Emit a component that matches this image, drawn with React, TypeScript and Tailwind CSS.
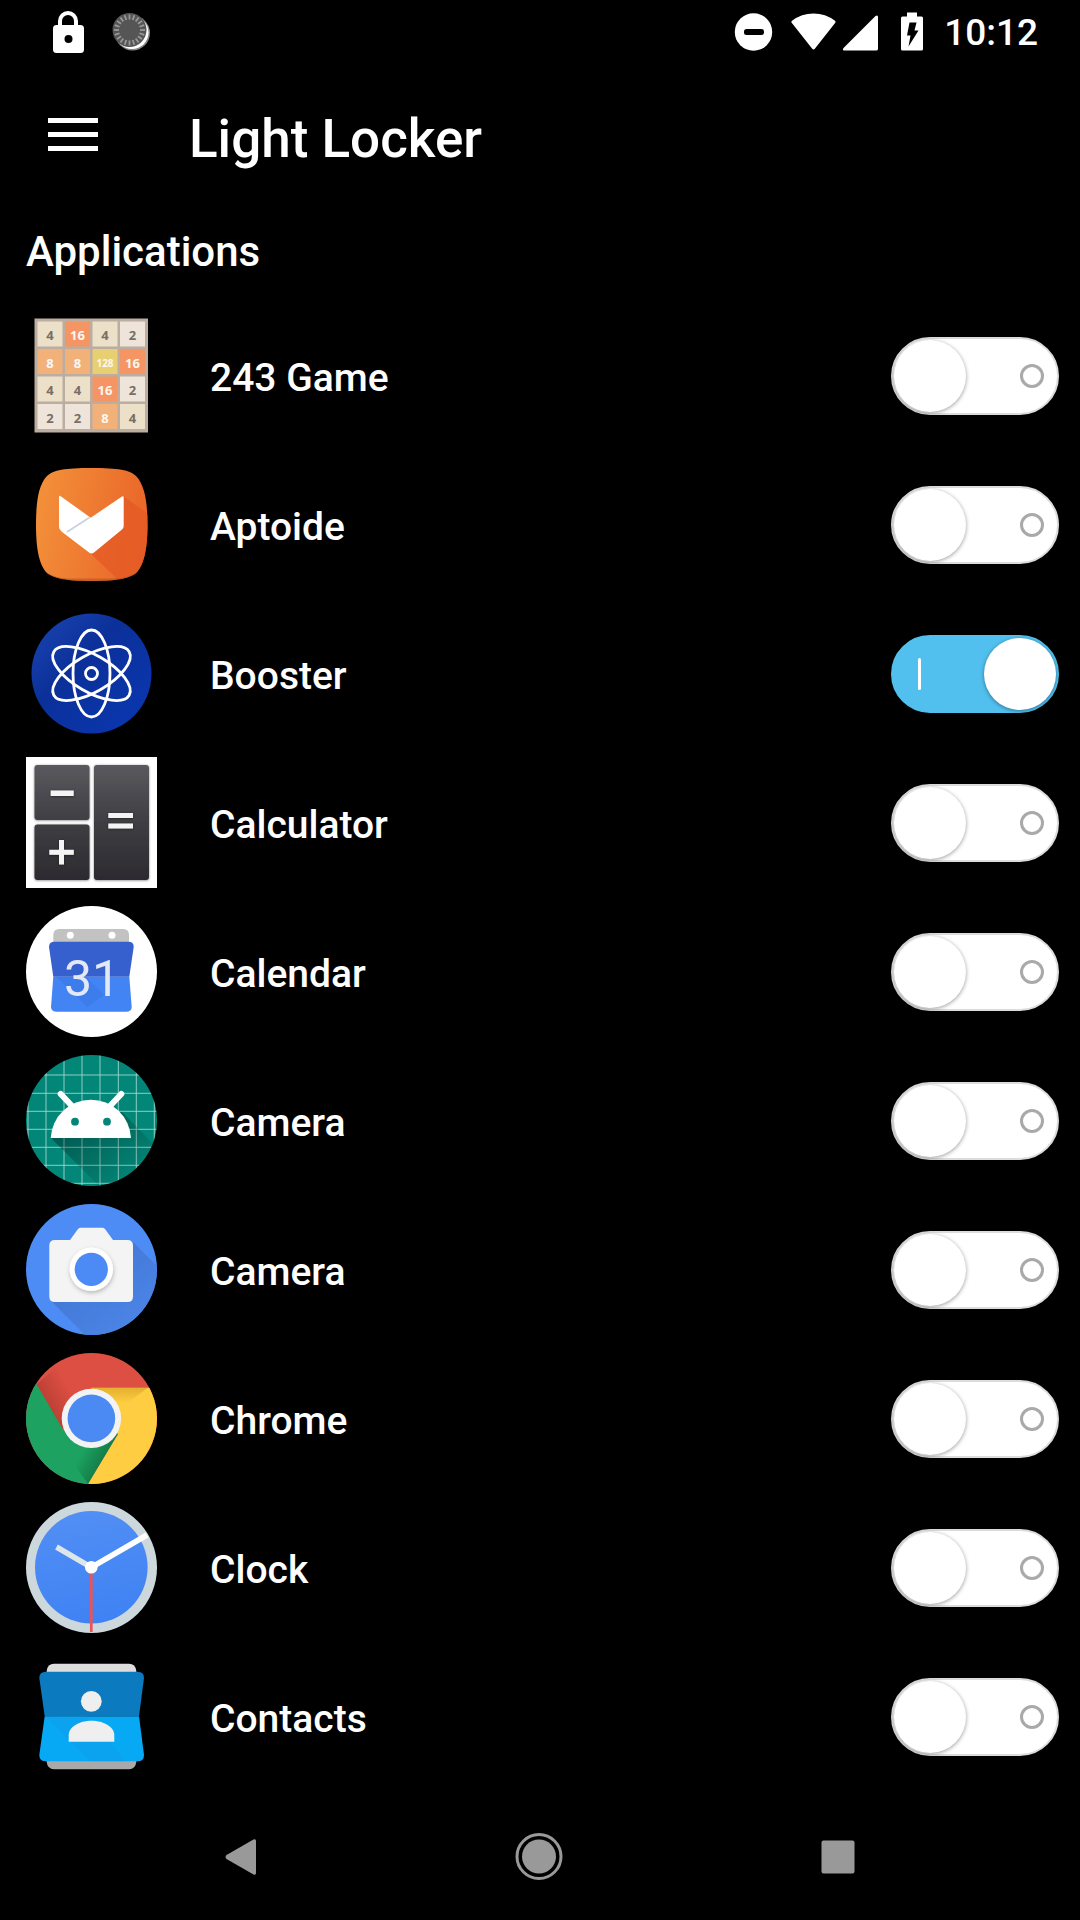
import React from "react";

function IconFrame({ children }: { children: React.ReactNode }) {
  return (
    <svg viewBox="0 0 131 131" className="size-[131px] shrink-0" aria-hidden="true">
      {children}
    </svg>
  );
}

const TILE_COLORS: Record<number, string> = {
  2: "#eee4da",
  4: "#ede0c8",
  8: "#f2b179",
  16: "#f59563",
  128: "#e8cf72",
};

const BOARD = [
  [4, 16, 4, 2],
  [8, 8, 128, 16],
  [4, 4, 16, 2],
  [2, 2, 8, 4],
];

function GameIcon() {
  return (
    <IconFrame>
      <rect x="8.5" y="8.5" width="113.5" height="114" fill="#bbada0" />
      {BOARD.map((row, r) =>
        row.map((n, c) => (
          <g key={`${r}-${c}`}>
            <rect x={11.5 + c * 27.5} y={11.5 + r * 27.5} width="25" height="25" fill={TILE_COLORS[n]} />
            <text
              x={24 + c * 27.5}
              y={(n === 128 ? 29 : 30) + r * 27.5}
              textAnchor="middle"
              fontSize={n === 128 ? 10 : 13}
              fontWeight="700"
              fontFamily="'Open Sans', 'Noto Sans', sans-serif"
              fill={n < 8 ? "#776e65" : "#f9f6f2"}
            >
              {n}
            </text>
          </g>
        )),
      )}
    </IconFrame>
  );
}

function AptoideIcon() {
  const shape =
    "M65.5 9C92 9 104 11 110 17C119 26 121.5 45 121.5 65.5C121.5 86 119 105 110 114C104 119 92 122 65.5 122C39 122 27 119 21 114C12 105 10 86 10 65.5C10 45 12 26 21 17C27 11 39 9 65.5 9Z";
  return (
    <IconFrame>
      <defs>
        <linearGradient id="apt" x1="0" y1="0.2" x2="1" y2="0.4">
          <stop offset="0" stopColor="#f3913a" />
          <stop offset="1" stopColor="#ea6629" />
        </linearGradient>
        <clipPath id="aptClip">
          <path d={shape} />
        </clipPath>
      </defs>
      <path d={shape} fill="url(#apt)" />
      <g clipPath="url(#aptClip)">
        <path d="M97 37L131 61V131H103L65 95Z" fill="#e45a26" opacity="0.75" />
        <path d="M14 108C27 121 39 119.500 65.500 119.500C92 119.500 104 121 117 108V131H14Z" fill="#b5541c" opacity="0.6" />
      </g>
      <path
        d="M33 38Q33 36 35 37.500L64.700 58.700L96 37.500Q97.700 36.500 97.700 38.500V67Q97.700 69 96 70.500L68 93.500Q65.500 95.500 63 93.500L35.500 72.500Q33 70.500 33 68Z"
        fill="#fff"
      />
      <path d="M63.500 58.500L41 73" stroke="#c9d3e0" strokeWidth="2" />
    </IconFrame>
  );
}

function BoosterIcon() {
  return (
    <IconFrame>
      <defs>
        <linearGradient id="boost" x1="0" y1="0" x2="1" y2="1">
          <stop offset="0" stopColor="#1c46b4" />
          <stop offset="0.4" stopColor="#0b3099" />
          <stop offset="1" stopColor="#0a37b2" />
        </linearGradient>
      </defs>
      <circle cx="65.5" cy="65.500" r="60" fill="url(#boost)" />
      <g fill="none" stroke="#fff" strokeWidth="2.8">
        <ellipse cx="65.5" cy="65.5" rx="18.5" ry="43.5" />
        <ellipse cx="65.5" cy="65.5" rx="18.5" ry="43.5" transform="rotate(60 65.5 65.5)" />
        <ellipse cx="65.5" cy="65.5" rx="18.5" ry="43.5" transform="rotate(-60 65.5 65.5)" />
        <circle cx="65.5" cy="65.5" r="6" />
      </g>
    </IconFrame>
  );
}

function CalculatorIcon() {
  return (
    <IconFrame>
      <defs>
        <linearGradient id="key" gradientUnits="userSpaceOnUse" x1="0" y1="8" x2="0" y2="123">
          <stop offset="0" stopColor="#59595e" />
          <stop offset="0.5" stopColor="#3e3e43" />
          <stop offset="1" stopColor="#2c2b30" />
        </linearGradient>
        <filter id="keySoft" x="-10%" y="-10%" width="120%" height="120%">
          <feDropShadow dx="0" dy="0.5" stdDeviation="1" floodColor="#000" floodOpacity="0.5" />
        </filter>
      </defs>
      <rect width="131" height="131" fill="#fff" />
      <g fill="url(#key)" filter="url(#keySoft)">
        <rect x="8.500" y="8" width="55" height="55" rx="3" />
        <rect x="8.500" y="67.500" width="55" height="55.500" rx="3" />
        <rect x="68" y="8" width="55" height="115" rx="3" />
      </g>
      <g fill="#f4f4f4" filter="url(#keySoft)">
        <rect x="24.700" y="33.500" width="23" height="5.500" />
        <rect x="23.300" y="92.800" width="24.500" height="5" />
        <rect x="33" y="83" width="5" height="24.500" />
        <rect x="82.300" y="56" width="24.700" height="5" />
        <rect x="82.300" y="66.500" width="24.700" height="5" />
      </g>
    </IconFrame>
  );
}

function CalendarIcon() {
  return (
    <IconFrame>
      <circle cx="65.5" cy="65.500" r="65.500" fill="#fff" />
      <path d="M27.300 40V29Q27.300 23 33.300 23H97Q103 23 103 29V40Z" fill="#c2c2c2" />
      <circle cx="44.300" cy="29.300" r="3.500" fill="#fff" />
      <circle cx="86" cy="29.300" r="3.500" fill="#fff" />
      <path d="M27.300 70.700L25 101Q25 105.700 31 105.700H100Q105.700 105.700 105.700 101L103.300 70.700Z" fill="#4284f3" />
      <path d="M27.300 70.700L23 41Q23 35.700 28.500 35.700H102Q108 35.700 107.700 41L103.300 70.700Z" fill="#3660ce" />
      <path d="M30 70.700L61 101L78 89L60 70.700Z" fill="#3872df" opacity="0.4" />
      <text
        x="66"
        y="89.500"
        textAnchor="middle"
        fontSize="50"
        fontWeight="400"
        fontFamily="Roboto, sans-serif"
        fill="#e3e8f6"
      >
        31
      </text>
    </IconFrame>
  );
}

function AndroidIcon() {
  return (
    <IconFrame>
      <defs>
        <clipPath id="andClip">
          <circle cx="65.5" cy="65.500" r="65.500" />
        </clipPath>
        <linearGradient id="andShade" gradientUnits="userSpaceOnUse" x1="50" y1="70" x2="90" y2="125">
          <stop offset="0" stopColor="#000" stopOpacity="0.32" />
          <stop offset="1" stopColor="#000" stopOpacity="0.04" />
        </linearGradient>
      </defs>
      <g clipPath="url(#andClip)">
        <rect width="131" height="131" fill="#028677" />
        <path
          d="M20 0V131M38 0V131M56 0V131M74 0V131M92.300 0V131M110.300 0V131M2 0V131M128.300 0V131M0 20H131M0 38.300H131M0 56.300H131M0 74.300H131M0 92.300H131M0 110.300H131M0 128.300H131"
          stroke="#9fd6cf"
          strokeWidth="0.9"
        />
        <path d="M25 83L73 131H131V93L96 57L60 60Z" fill="url(#andShade)" />
      </g>
      <path d="M24.700 83A40.200 40.300 0 0 1 105 83Z" fill="#fff" />
      <path d="M34.700 39L46 51M95.300 39L84 51" stroke="#fff" strokeWidth="6" strokeLinecap="round" />
      <circle cx="49" cy="66.700" r="3.900" fill="#028677" />
      <circle cx="81" cy="66.700" r="3.900" fill="#028677" />
    </IconFrame>
  );
}

function CameraIcon() {
  return (
    <IconFrame>
      <defs>
        <clipPath id="camClip">
          <circle cx="65.5" cy="65.500" r="65.500" />
        </clipPath>
        <linearGradient id="camShade" gradientUnits="userSpaceOnUse" x1="60" y1="60" x2="110" y2="120">
          <stop offset="0" stopColor="#4275cf" />
          <stop offset="1" stopColor="#4a83e4" />
        </linearGradient>
        <filter id="lensShadow" x="-30%" y="-30%" width="160%" height="160%">
          <feDropShadow dx="0.500" dy="2" stdDeviation="2" floodColor="#000" floodOpacity="0.25" />
        </filter>
      </defs>
      <g clipPath="url(#camClip)">
        <rect width="131" height="131" fill="#4e8cf5" />
        <path d="M25 97L59 131H131V62L106 37Z" fill="url(#camShade)" opacity="0.85" />
      </g>
      <path
        d="M29 36H44L52 25Q53 23.700 55 23.700H76Q78 23.700 79 25L87 36H101.500Q107 36 107 41.500V92.500Q107 98 101.500 98H29Q23.300 98 23.300 92.500V41.500Q23.300 36 29 36Z"
        fill="#f4f4f4"
      />
      <circle cx="65.300" cy="65.300" r="21.700" fill="#fff" filter="url(#lensShadow)" />
      <circle cx="65.300" cy="65.300" r="16.600" fill="#4c8bf5" />
    </IconFrame>
  );
}

function ChromeIcon() {
  return (
    <IconFrame>
      <defs>
        <clipPath id="chrClip">
          <circle cx="65.5" cy="65.500" r="65.500" />
        </clipPath>
        <linearGradient id="chrRed" gradientUnits="userSpaceOnUse" x1="20" y1="54" x2="46" y2="39">
          <stop offset="0" stopColor="#8f2b22" stopOpacity="0.45" />
          <stop offset="1" stopColor="#8f2b22" stopOpacity="0" />
        </linearGradient>
        <linearGradient id="chrYellow" gradientUnits="userSpaceOnUse" x1="0" y1="35" x2="0" y2="50">
          <stop offset="0" stopColor="#b07a10" stopOpacity="0.35" />
          <stop offset="1" stopColor="#b07a10" stopOpacity="0" />
        </linearGradient>
        <linearGradient id="chrGreen" gradientUnits="userSpaceOnUse" x1="80" y1="102" x2="60" y2="91">
          <stop offset="0" stopColor="#0a5a30" stopOpacity="0.5" />
          <stop offset="1" stopColor="#0a5a30" stopOpacity="0" />
        </linearGradient>
      </defs>
      <g clipPath="url(#chrClip)">
        <rect width="131" height="131" fill="#dd4f43" />
        <path d="M10.700 31.300L38 78L65.500 65.500L92 81L62 131H0V13Z" fill="#1da261" />
        <path d="M65.500 34.700H131V131H62L92 81L65.500 65.500Z" fill="#ffcd42" />
        <path d="M10.700 31.300L36 75L65 65V35L30 15Z" fill="url(#chrRed)" />
        <path d="M65.500 34.700H122L90 58H65Z" fill="url(#chrYellow)" />
        <path d="M62 131L92 81L65 65L40 100Z" fill="url(#chrGreen)" />
      </g>
      <circle cx="65.400" cy="65.400" r="29.700" fill="#f3f3f3" />
      <circle cx="65.400" cy="65.400" r="23.800" fill="#4c8af3" />
    </IconFrame>
  );
}

function ClockIcon() {
  return (
    <IconFrame>
      <defs>
        <linearGradient id="clockFace" x1="0.3" y1="0" x2="0.5" y2="1">
          <stop offset="0" stopColor="#528ff5" />
          <stop offset="1" stopColor="#3f82f3" />
        </linearGradient>
      </defs>
      <circle cx="65.5" cy="65.500" r="65.500" fill="#cdd8dc" />
      <circle cx="65.300" cy="65.300" r="56.300" fill="url(#clockFace)" />
      <path d="M65.300 65.300L30.500 45" stroke="#dfe6ea" strokeWidth="5.500" />
      <path d="M65.300 65.300V130" stroke="#ea5458" strokeWidth="2.700" />
      <path d="M65.300 65.300L121 33" stroke="#fff" strokeWidth="5.500" />
      <circle cx="65.300" cy="65.300" r="6.300" fill="#fff" />
    </IconFrame>
  );
}

function ContactsIcon() {
  return (
    <IconFrame>
      <path d="M20.700 24V20Q21.500 12.700 28 12.700H103Q109.500 12.700 110.300 20V24Z" fill="#dedede" />
      <path d="M20.700 107V111Q21.500 118.300 28 118.300H103Q109.500 118.300 110.300 111V107Z" fill="#a9a9a9" />
      <path d="M18.700 65.300L13.300 104Q13.300 110.300 20 110.300H111.500Q118 110.300 118 104L113 65.300Z" fill="#08a9f4" />
      <path d="M18.700 65.300L13.300 27Q13.300 20.700 20 20.700H111.500Q118 20.700 118 27L113 65.300Z" fill="#0b7abf" />
      <path d="M19 65.300L64 110.300H100L83 90L60 65.300Z" fill="#1098e4" opacity="0.35" />
      <circle cx="65.300" cy="50.300" r="10.400" fill="#efefef" />
      <path d="M42.700 90.700V84C42.700 76 53 69.700 65.500 69.700C78 69.700 88.300 76 88.300 84V90.700Z" fill="#efefef" />
    </IconFrame>
  );
}

const APPS = [
  { name: "243 Game", Icon: GameIcon, locked: false },
  { name: "Aptoide", Icon: AptoideIcon, locked: false },
  { name: "Booster", Icon: BoosterIcon, locked: true },
  { name: "Calculator", Icon: CalculatorIcon, locked: false },
  { name: "Calendar", Icon: CalendarIcon, locked: false },
  { name: "Camera", Icon: AndroidIcon, locked: false },
  { name: "Camera", Icon: CameraIcon, locked: false },
  { name: "Chrome", Icon: ChromeIcon, locked: false },
  { name: "Clock", Icon: ClockIcon, locked: false },
  { name: "Contacts", Icon: ContactsIcon, locked: false },
];

function Toggle({ id, on }: { id: string; on: boolean }) {
  return (
    <span className="relative block h-[78px] w-[168px] shrink-0">
      <input
        id={id}
        type="checkbox"
        role="switch"
        defaultChecked={on}
        className="peer block size-full cursor-pointer appearance-none rounded-full border-2 border-[#dcdcdc] bg-white checked:border-[#52c0ef] checked:bg-[#52c0ef]"
      />
      <span className="pointer-events-none absolute top-[27px] right-[15px] size-6 rounded-full border-3 border-[#a9a9a9] peer-checked:hidden" />
      <span className="pointer-events-none absolute top-[23px] left-[27px] hidden h-8 w-[3px] rounded-full bg-white peer-checked:block" />
      <span className="pointer-events-none absolute top-[3px] left-[3px] size-[72px] rounded-full bg-white shadow-[0_1px_4px_rgba(0,0,0,0.4)] peer-checked:left-[93px]" />
    </span>
  );
}

function StatusBar() {
  const ticks = Array.from({ length: 20 }, (_, i) => i * 18);
  return (
    <div className="flex h-[63px] items-center justify-between pr-[42px] pl-[52px]">
      <div className="flex items-center gap-7">
        <svg viewBox="0 0 32 42" className="h-[42px] w-8" aria-hidden="true">
          <path d="M8 17V10a8 8 0 0 1 16 0v7" fill="none" stroke="#fff" strokeWidth="4" />
          <rect x="1" y="14" width="31" height="28" rx="3.500" fill="#fff" />
          <circle cx="16.500" cy="28" r="4" fill="#000" />
        </svg>
        <svg viewBox="0 0 40 42" className="h-[42px] w-10" aria-hidden="true">
          <circle cx="20.500" cy="22" r="17.500" fill="#888" />
          <circle cx="20" cy="21.500" r="16.500" fill="#fff" />
          <circle cx="17.500" cy="19" r="17" fill="#555" />
          {ticks.map((a) => (
            <path key={a} d="M17.500 3.500V8.500" stroke="#999" strokeWidth="1.800" transform={`rotate(${a} 17.500 19)`} />
          ))}
        </svg>
      </div>
      <div className="flex items-center">
        <svg viewBox="0 0 190 40" className="h-10 w-[190px]" aria-hidden="true">
          <circle cx="19.500" cy="20" r="18.700" fill="#fff" />
          <rect x="10" y="17" width="20" height="6" rx="2.500" fill="#000" />
          <path
            d="M57 10.500Q56.500 9.500 57.500 8.800Q67 1.500 79 1.500Q91 1.500 100.500 8.800Q101.500 9.500 100.800 10.700L80.500 36.500Q79 38.300 77.500 36.500Z"
            fill="#fff"
            transform="translate(0.5 0)"
          />
          <path d="M110 38.500Q108 38 109.500 36L141.500 4Q144 2.500 144 5V37Q144 38.500 142 38.500Z" fill="#fff" />
          <path d="M173 0.500H183V4.500H187.500Q189 4.500 189 6V37Q189 38.500 187.500 38.500H168.500Q167 38.500 167 37V6Q167 4.500 168.500 4.500H173Z" fill="#fff" />
          <path d="M175.500 10.500H182.500L180.500 18.500H184.500L174.500 34.500L176.500 23.500H173Z" fill="#000" />
        </svg>
        <time className="ml-5 pt-0.5 text-[37px] leading-none font-medium">10:12</time>
      </div>
    </div>
  );
}

export default function App() {
  return (
    <div className="flex min-h-screen flex-col bg-black font-[Roboto,sans-serif] text-white">
      <StatusBar />
      <header className="flex h-[147px] items-center gap-[91px] pl-12">
        <button type="button" aria-label="Open menu" className="flex flex-col gap-[9px] pb-1">
          <span className="block h-[5px] w-[50px] bg-white" />
          <span className="block h-[5px] w-[50px] bg-white" />
          <span className="block h-[5px] w-[50px] bg-white" />
        </button>
        <h1 className="pt-1 text-[53px] leading-[62px] font-medium">Light Locker</h1>
      </header>
      <main>
        <h2 className="px-[26px] pt-[17px] pb-6 text-[42px] leading-[50px] font-medium">Applications</h2>
        <ul>
          {APPS.map(({ name, Icon, locked }, i) => (
            <li key={i} className="flex items-center py-[9px] pr-[21px] pl-[26px]">
              <Icon />
              <label htmlFor={`app-${i}`} className="flex-1 pt-1 pl-[53px] text-[39px] leading-[48px] font-medium">
                {name}
              </label>
              <Toggle id={`app-${i}`} on={locked} />
            </li>
          ))}
        </ul>
      </main>
      <nav className="mt-auto grid h-[126px] grid-cols-3 place-items-center pr-[92px] pl-[90px]">
        <button type="button" aria-label="Back">
          <svg viewBox="0 0 48 48" className="size-12">
            <path d="M10.500 26Q8.500 24 10.500 22L37.500 6.500Q40 5.500 40 8V40Q40 42.500 37.500 41.500Z" fill="#999" />
          </svg>
        </button>
        <button type="button" aria-label="Home">
          <svg viewBox="0 0 48 48" className="size-12">
            <circle cx="24" cy="23.500" r="22" fill="none" stroke="#999" strokeWidth="3" />
            <circle cx="24" cy="23.500" r="17" fill="#999" />
          </svg>
        </button>
        <button type="button" aria-label="Recent apps">
          <svg viewBox="0 0 48 48" className="size-12">
            <rect x="7.500" y="7.500" width="33" height="33" rx="2" fill="#999" />
          </svg>
        </button>
      </nav>
    </div>
  );
}
